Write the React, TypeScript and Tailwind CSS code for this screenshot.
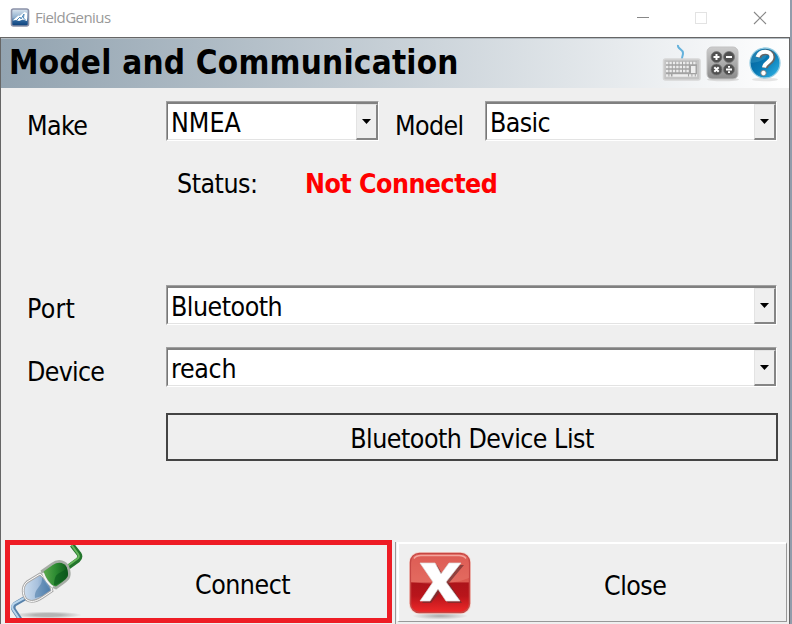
import React from "react";

const face = "[font-family:'DejaVu_Sans_Condensed','DejaVu_Sans',sans-serif] [font-stretch:condensed]";

function Combo({ value, width, spacing }: { value: string; width: string; spacing: string }) {
  return (
    <div className={`${width} flex h-10 shrink-0 border border-t-[#a0a0a0] border-l-[#a0a0a0] border-r-white border-b-white`}>
      <div className="flex min-w-0 flex-1 border-t-2 border-l border-b border-t-[#808080] border-l-[#777] border-b-[#e3e3e3] bg-white">
        <span className={`flex-1 pl-[3px] text-[26.5px] leading-[37px] ${spacing}`}>{value}</span>
        <span className="flex h-[36px] w-[22px] items-center justify-center border-t border-l border-r-2 border-b-2 border-t-[#e3e3e3] border-l-[#e3e3e3] border-r-[#858585] border-b-[#858585] bg-[#efefef]">
          <svg width="9" height="5" viewBox="0 0 9 5"><path d="M0 0h9L4.5 5z" /></svg>
        </span>
      </div>
    </div>
  );
}

function AppIcon() {
  return (
    <svg width="20" height="20" viewBox="0 0 20 20">
      <defs><linearGradient id="app" x2="0" y2="1"><stop stopColor="#dbe5ef" /><stop offset=".5" stopColor="#8fb0cf" /><stop offset=".7" stopColor="#2b639b" /><stop offset="1" stopColor="#093d78" /></linearGradient></defs>
      <rect x="1.5" y="1" width="17" height="17" rx="2" fill="url(#app)" stroke="#8b91a8" strokeWidth="1.6" />
      <path d="M2.5 12.5l6-5 1 .5 5-4 2.5 1v8l-4-1.500-4 1.500-3-1z" fill="#fff" />
      <path d="M7 12l3-3 1 2 3-5-.5 4 2 2" fill="none" stroke="#4e88b9" strokeWidth="1" />
    </svg>
  );
}

function KeyboardIcon() {
  return (
    <svg width="40" height="40" viewBox="0 0 40 40">
      <path d="M16 1c-1 4 5 4 5 8 0 3-1 3-1 6" fill="none" stroke="#65b2dc" strokeWidth="2" />
      <rect x="1.500" y="15" width="36.500" height="21" rx="2" fill="#c4c4c4" stroke="#d6d6d6" strokeWidth="1.500" />
      <path d="M4 17.500h31v14.500h-31z" fill="#a3a3a3" />
      <path d="M4 19h31M4 23h23M4 27h23M4 31.500h5M27 31.500h8" stroke="#ececec" strokeWidth="2.600" strokeDasharray="2.400 1" />
      <path d="M10.500 31.500h15.500" stroke="#eee" strokeWidth="2.600" />
      <path d="M29 22h4.500v7h-4.500z" fill="#eee" />
    </svg>
  );
}

function CalcIcon() {
  return (
    <svg width="36" height="38" viewBox="0 0 36 38">
      <defs><linearGradient id="calc" x2="0" y2="1"><stop stopColor="#cdcdcd" /><stop offset="1" stopColor="#8a8a8a" /></linearGradient></defs>
      <ellipse cx="18" cy="34.500" rx="16" ry="1.800" fill="#dadada" />
      <rect x="2" y="2" width="31" height="32" rx="5" fill="url(#calc)" stroke="#c2c2c2" />
      {[[11.5, 12], [24, 12], [11.5, 24.5], [24, 24.5]].map(([x, y]) => <circle key={`${x}-${y}`} cx={x} cy={y} r="5.5" fill="#505050" stroke="#777" strokeWidth=".8" />)}
      <path d="M8.500 12h6M11.500 9v6M21 12h6M9.300 22.300l4.400 4.400M13.700 22.300l-4.400 4.400M21 24.500h6M24 21v1.800M24 26.200V28" stroke="#fff" strokeWidth="2" />
    </svg>
  );
}

function HelpIcon() {
  return (
    <svg width="34" height="36" viewBox="0 0 34 36">
      <defs><linearGradient id="help" x2="1" y2="1"><stop stopColor="#065d94" /><stop offset=".5" stopColor="#0879b4" /><stop offset="1" stopColor="#35b9ea" /></linearGradient></defs>
      <ellipse cx="17" cy="33.500" rx="13" ry="1.800" fill="#e4e4e4" />
      <circle cx="17" cy="17" r="15" fill="url(#help)" stroke="#94cce2" strokeWidth="1.3" />
      <path d="M2 17a15 15 0 0 1 14-14c7 6 1 13-14 14z" fill="#40a3cb" opacity=".4" />
      <g fill="none" strokeLinejoin="round"><path d="M10.500 11.500c2-7 14-7 14 0 0 5-7 5-7.500 10.500" stroke="#666" strokeWidth="5.500" /><path d="M9.500 11c2-7 14-7 14 0 0 5-7 5-7.500 10.500" stroke="#fff" strokeWidth="4" /></g>
      <circle cx="15.500" cy="27" r="2.700" fill="#fff" stroke="#777" strokeWidth=".8" />
    </svg>
  );
}

function CableIcon() {
  return (
    <svg width="76" height="73" viewBox="0 0 76 73">
      <defs>
        <linearGradient id="green"><stop stopColor="#61ad50" /><stop offset=".5" stopColor="#2c8b32" /><stop offset="1" stopColor="#0a5317" /></linearGradient>
        <linearGradient id="blue"><stop stopColor="#cfdfef" /><stop offset=".5" stopColor="#a8c1dd" /><stop offset="1" stopColor="#5582b3" /></linearGradient>
        <radialGradient id="shade"><stop offset=".4" stopColor="#b4b4b4" /><stop offset="1" stopColor="#b4b4b4" stopOpacity="0" /></radialGradient>
      </defs>
      <ellipse cx="38" cy="70" rx="34" ry="3.5" fill="url(#shade)" />
      <path d="M62 0l7 9q2 3-1 6l-11 8" fill="none" stroke="#23752c" strokeWidth="5" />
      <path d="M61.500 0l6.500 9q2 3-1 5l-11 8" fill="none" stroke="#67b65d" strokeWidth="2" />
      <path d="M17 52L5 59q-3 3-1 6l6 9" fill="none" stroke="#5882ab" strokeWidth="4.500" />
      <path d="M17 51.500L4 58.500q-3 3-1 6l6 9" fill="none" stroke="#b9d5ec" strokeWidth="2" />
      <path d="M30 29L17 37c-6 5-4 15 0 18 5 3 10 1 16-3l9-6-2-8z" fill="url(#blue)" stroke="#a9a9a9" strokeWidth="2.800" />
      <path d="M30 29L17 37c-6 5-4 15 0 18 5 3 10 1 16-3l9-6-2-8z" fill="none" stroke="#fff" strokeWidth="1" />
      <path d="M32 26l10-7c7-5 14-2 16 3 3 9 1 12-5 16l-7 5-5-2c-4-5-7-8-9-15z" fill="url(#green)" stroke="#a6aca5" strokeWidth="2.600" />
      <path d="M33 28c2 6 5 11 10 14" fill="none" stroke="#f5f5f5" strokeWidth="2" />
      <path d="M44 40c1-13 4-10 12-16l-1-5c7 12-2 17-9 21z" fill="#08561b" opacity=".6" />
      <path d="M25 53c-1-11 8-10 7-21l8 13-8 6z" fill="#3e719f" opacity=".5" />
    </svg>
  );
}

function CloseIcon() {
  return (
    <svg width="68" height="70" viewBox="0 0 68 70">
      <defs>
        <linearGradient id="red" x2="0" y2="1"><stop stopColor="#d2403c" /><stop offset=".48" stopColor="#dc5a50" /><stop offset=".5" stopColor="#ad141a" /><stop offset=".72" stopColor="#b9151b" /><stop offset="1" stopColor="#ef2929" /></linearGradient>
        <radialGradient id="red-shade"><stop stopColor="#aaa" /><stop offset="1" stopColor="#aaa" stopOpacity="0" /></radialGradient>
      </defs>
      <ellipse cx="34" cy="66" rx="28" ry="3.5" fill="url(#red-shade)" />
      <rect x="3" y="2" width="62" height="62" rx="10" fill="#f4d0c9" />
      <rect x="4.500" y="3.500" width="59" height="59" rx="9" fill="url(#red)" stroke="#c64643" strokeWidth="1.500" />
      <path d="M5 32V13q0-9 9-9h40q9 0 9 9v15q-22 9-58 4z" fill="#ed8579" opacity=".4" />
      <path d="M8 8.500q2-3 7-3h38q5 0 7 3" fill="none" stroke="#f3a59d" strokeWidth="1.500" />
      <path d="M16 15h15l6 10 8-10h13L43 33l13 20H42l-8-11-9 11H16l14-20z" fill="#6e3030" opacity=".7" />
      <path d="M14 13h15l6 11 8-11h12L40 32l14 19H40l-8-12-8 12H14l13-19z" fill="#fff" stroke="#ddd" strokeWidth=".7" />
    </svg>
  );
}

export default function App() {
  return (
    <div className={`flex h-[624px] w-[792px] overflow-hidden bg-[#efefef] text-black ${face}`}>
      <main className="flex w-[790px] flex-col">
        <header className="flex h-[37px] items-center bg-white pb-[2px] pl-[10px]">
          <AppIcon />
          <span className="ml-[5px] flex-1 text-[15px] tracking-[-0.55px] text-[#999] [font-family:'Open_Sans',sans-serif] [font-stretch:normal]">FieldGenius</span>
          <div className="flex items-center pr-[23px]">
            <svg width="130" height="14" viewBox="0 0 130 14" fill="none"><path d="M0 6.500h12" stroke="#888" /><rect x="58.500" y="1.500" width="11" height="11" stroke="#e3e3e3" /><path d="M117 1l12 12M129 1l-12 12" stroke="#888" strokeWidth="1.1" /></svg>
          </div>
        </header>
        <div className="flex h-[587px] flex-col border-t border-r border-l border-[#666]">
          <div className="flex h-[50px] items-center border-t border-[#b5bdc3] bg-linear-to-r from-[#92a3b0] to-white pr-[7px] pl-[8px]">
            <h1 className="flex-1 pb-[2px] text-[33px] leading-[46px] font-bold tracking-[0.22px] whitespace-nowrap">Model and Communication</h1>
            <div className="flex items-center"><KeyboardIcon /><span className="ml-[3px] flex"><CalcIcon /></span><span className="ml-[7px] flex"><HelpIcon /></span></div>
          </div>
          <div className="flex h-[454px] flex-col pt-[13px] pl-[26px] text-[26.5px] leading-8 whitespace-nowrap">
            <div className="flex h-[40px]">
              <label className="w-[139px] pt-[9px] tracking-[-0.6px]">Make</label>
              <Combo value="NMEA" width="w-[213px]" spacing="tracking-[0px]" />
              <label className="w-[106px] pt-[9px] pl-[16px] tracking-[-0.6px]">Model</label>
              <Combo value="Basic" width="w-[292px]" spacing="tracking-[-0.6px]" />
            </div>
            <div className="flex h-[144px] pt-[27px] pl-[150px]">
              <span className="w-[128px] tracking-[-0.5px]">Status:</span>
              <strong className="tracking-[-0.5px] text-[#ff0000]">Not Connected</strong>
            </div>
            <div className="flex h-[62px]">
              <label className="w-[139px] pt-[8px] tracking-[0.2px]">Port</label>
              <Combo value="Bluetooth" width="w-[611px]" spacing="tracking-[-0.5px]" />
            </div>
            <div className="flex h-[66px]">
              <label className="w-[139px] pt-[9px] tracking-[-0.7px]">Device</label>
              <Combo value="reach" width="w-[611px]" spacing="tracking-[-0.3px]" />
            </div>
            <button className="ml-[139px] h-[48px] w-[612px] border-2 border-[#444] bg-[#efefef] pt-[3px] tracking-[-0.5px]">Bluetooth Device List</button>
          </div>
          <footer className="flex h-[82px] text-[26.5px] tracking-[-0.5px]">
            <div className="flex w-[395px] border-r border-[#999] pl-[4px]">
              <button className="-mt-[2px] flex h-[83px] w-[387px] items-center border-5 border-[#ee1c25] text-left">
                <span className="flex w-[185px]"><CableIcon /></span><span className="pt-[7px]">Connect</span>
              </button>
            </div>
            <button className="ml-px flex h-[80px] w-[390px] items-center border-t-2 border-r border-b border-l-2 border-t-white border-r-[#999] border-b-[#999] border-l-white text-left">
              <span className="flex w-[205px] pt-[4px] pl-[7px]"><CloseIcon /></span><span className="pt-[6px]">Close</span>
            </button>
          </footer>
        </div>
      </main>
      <div className="w-[2px] bg-[#929cab]" />
    </div>
  );
}
